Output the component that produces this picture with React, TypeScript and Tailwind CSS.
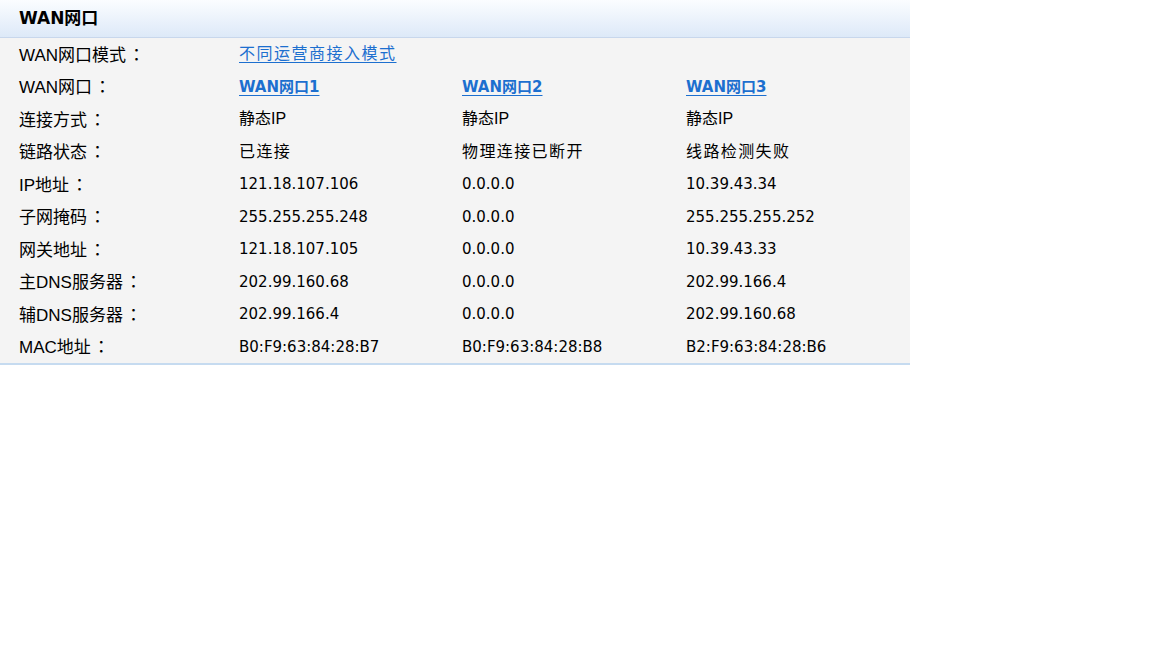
import React from 'react'

const rows: { label: string; values: string[]; kind?: 'link' | 'cjk' | 'status' }[] = [
    { label: 'WAN网口', values: ['WAN网口1', 'WAN网口2', 'WAN网口3'], kind: 'link' },
    { label: '连接方式', values: ['静态IP', '静态IP', '静态IP'], kind: 'cjk' },
    { label: '链路状态', values: ['已连接', '物理连接已断开', '线路检测失败'], kind: 'status' },
    { label: 'IP地址', values: ['121.18.107.106', '0.0.0.0', '10.39.43.34'] },
    { label: '子网掩码', values: ['255.255.255.248', '0.0.0.0', '255.255.255.252'] },
    { label: '网关地址', values: ['121.18.107.105', '0.0.0.0', '10.39.43.33'] },
    { label: '主DNS服务器', values: ['202.99.160.68', '0.0.0.0', '202.99.166.4'] },
    { label: '辅DNS服务器', values: ['202.99.166.4', '0.0.0.0', '202.99.160.68'] },
    { label: 'MAC地址', values: ['B0:F9:63:84:28:B7', 'B0:F9:63:84:28:B8', 'B2:F9:63:84:28:B6'] },
]

const labelFont = "font-['Liberation_Sans','Noto_Sans_CJK_SC',sans-serif]"
const valueFont = "font-['DejaVu_Sans','Noto_Sans_CJK_SC',sans-serif]"

function Label({ text }: { text: string }) {
    return (
        <span className={`${labelFont} text-[17px] text-black`}>
            {text}
            <span className="pl-[2px] font-['Noto_Sans_CJK_TC',sans-serif]">：</span>
        </span>
    )
}

function Value({ text, kind }: { text: string; kind?: 'link' | 'cjk' | 'status' }) {
    if (kind === 'link') {
        return (
            <a className={`${valueFont} text-[15px] font-bold text-[#1c6fcf] underline underline-offset-[3px]`}>
                {text}
            </a>
        )
    }
    if (kind === 'cjk') {
        return <span className={`${labelFont} text-[16px] text-black`}>{text}</span>
    }
    if (kind === 'status') {
        return <span className={`${labelFont} text-[16px] tracking-[1.4px] text-black`}>{text}</span>
    }
    return <span className={`${valueFont} text-[15px] text-black`}>{text}</span>
}

export default function App() {
    return (
        <div className="w-[910px] bg-white">
            {/* Header */}
            <div className="h-[38px] flex items-center px-[19px] border-b border-[#c8d7ec] bg-gradient-to-b from-[#fbfdff] to-[#dde9f8]">
                <span className={`${valueFont} text-[17px] font-bold text-black`}>WAN网口</span>
            </div>

            {/* Body */}
            <div className="bg-[#f4f4f4] border-b-2 border-[#c6dbf0]">
                <div className="grid grid-cols-[220px_223px_224px_1fr] h-[32.5px] items-center pl-[19px]">
                    <Label text="WAN网口模式" />
                    <a className={`${labelFont} col-span-3 text-[16px] tracking-[1.5px] text-[#1c6fcf] underline underline-offset-[3px]`}>
                        不同运营商接入模式
                    </a>
                </div>
                {rows.map(r => (
                    <div key={r.label} className="grid grid-cols-[220px_223px_224px_1fr] h-[32.5px] items-center pl-[19px]">
                        <Label text={r.label} />
                        {r.values.map((v, i) => (
                            <Value key={i} text={v} kind={r.kind} />
                        ))}
                    </div>
                ))}
            </div>
        </div>
    )
}
